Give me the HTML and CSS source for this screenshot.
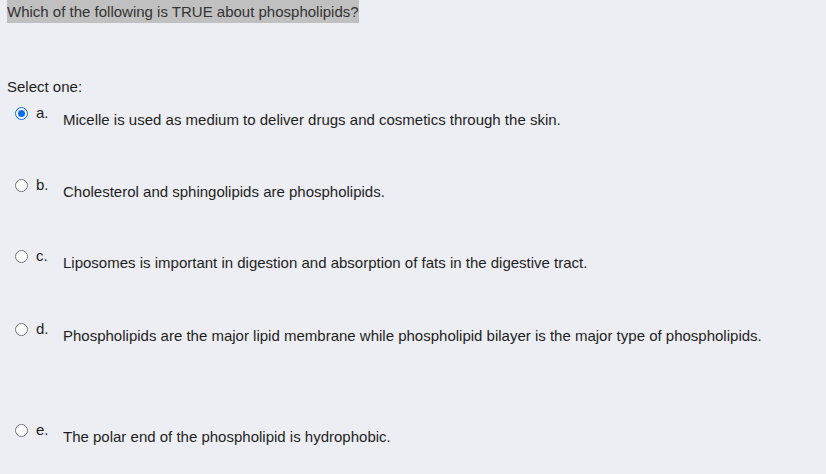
FILE: index.html
```html
<!DOCTYPE html>
<html>
<head>
<meta charset="utf-8">
<link rel="stylesheet" href="styles.css">
</head>
<body>
<div class="quiz">
  <div class="qtext"><span class="hl">Which of the following is TRUE about phospholipids?</span></div>
  <div class="prompt">Select one:</div>
  <div class="answers">
    <div class="opt o1"><span class="radio checked"></span><span class="lbl">a.</span><span class="txt">Micelle is used as medium to deliver drugs and cosmetics through the skin.</span></div>
    <div class="opt o2"><span class="radio"></span><span class="lbl">b.</span><span class="txt">Cholesterol and sphingolipids are phospholipids.</span></div>
    <div class="opt o3"><span class="radio"></span><span class="lbl">c.</span><span class="txt">Liposomes is important in digestion and absorption of fats in the digestive tract.</span></div>
    <div class="opt o4"><span class="radio"></span><span class="lbl">d.</span><span class="txt">Phospholipids are the major lipid membrane while phospholipid bilayer is the major type of phospholipids.</span></div>
    <div class="opt o5"><span class="radio"></span><span class="lbl">e.</span><span class="txt">The polar end of the phospholipid is hydrophobic.</span></div>
  </div>
</div>
</body>
</html>
```
FILE: styles.css
```css
html, body {
  margin: 0;
  padding: 0;
  background: #edeef3;
}
body {
  font-family: "Liberation Sans", Arial, sans-serif;
  font-size: 15px;
  color: #1e1e1e;
}
.quiz {
  padding: 0 0 0 7px;
}
.qtext {
  height: 23px;
  line-height: 23px;
}
.hl {
  display: inline-block;
  background: #c0c0c0;
  color: #333;
}
.prompt {
  margin-top: 55px;
  line-height: 18px;
}
.answers {
  margin-top: 8px;
  display: flex;
  flex-direction: column;
}
.opt {
  display: flex;
  align-items: flex-start;
  height: 72px;
}
.o2 { height: 71px; }
.o3 { height: 73px; }
.o4 { height: 101px; }
.radio {
  width: 11px;
  height: 11px;
  border: 1px solid #767676;
  border-radius: 50%;
  background: #fff;
  margin: 3px 0 0 8px;
  flex: none;
  box-sizing: content-box;
  position: relative;
}
.radio.checked {
  border-color: #0b6cf0;
}
.radio.checked::after {
  content: "";
  position: absolute;
  left: 2px;
  top: 2px;
  width: 7px;
  height: 7px;
  border-radius: 50%;
  background: #0b6cf0;
}
.lbl {
  margin: 1px 0 0 8px;
  width: 27px;
  line-height: 15px;
  flex: none;
}
.txt {
  margin-top: 7px;
  line-height: 17px;
}
```
